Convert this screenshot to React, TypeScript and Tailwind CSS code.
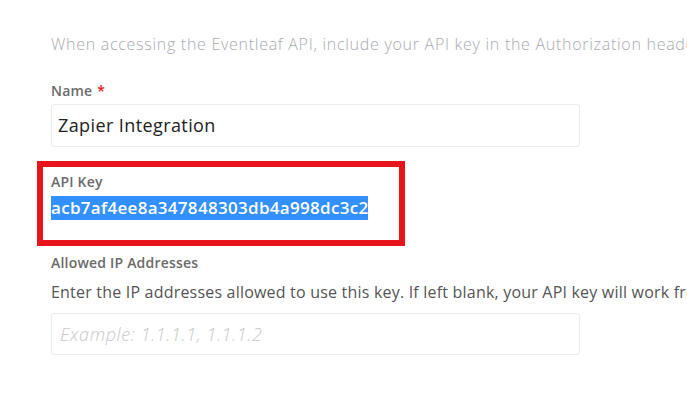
import React from "react";

export default function App() {
  return (
    <div className="w-[687px] h-[401px] overflow-hidden bg-white font-['Open_Sans',sans-serif]">
      <div className="pl-[51px] pt-[34px] w-[900px]">
        <p className="text-[16px] leading-[20px] text-[#a7abb0] whitespace-nowrap font-light tracking-[0.72px]">
          When accessing the Eventleaf API, include your API key in the Authorization header with every request.
        </p>
        <div className="mt-[29px] text-[14px] leading-[16px] font-semibold text-[#6b6b6b] tracking-[0.2px]">
          Name <span className="text-[#e8141c] ml-[1px]">*</span>
        </div>
        <div className="mt-[5px] w-[529px] h-[43px] border border-[#ececec] rounded-[3px] px-[6px] flex items-center text-[18px] text-[#222] tracking-[0.4px]">
          Zapier Integration
        </div>
        <div className="mt-[14px] -ml-[14px] w-[368px] h-[85px] border-[6px] border-[#e8141c] pl-[8px] pt-[7px]">
          <div className="text-[14px] leading-[16px] font-semibold text-[#6b6b6b] tracking-[0.2px]">API Key</div>
          <div className="mt-[6px] h-[24px] flex">
            <span className="bg-[#3390ff] text-white text-[17px] leading-[24px] font-semibold tracking-[0.3px]">
              acb7af4ee8a347848303db4a998dc3c2
            </span>
          </div>
        </div>
        <div className="mt-[9px] text-[14px] leading-[16px] font-semibold text-[#6b6b6b] tracking-[0.2px]">Allowed IP Addresses</div>
        <p className="mt-[11px] text-[16px] leading-[20px] text-[#555] whitespace-nowrap tracking-[0.2px]">
          Enter the IP addresses allowed to use this key. If left blank, your API key will work from any IP address.
        </p>
        <div className="mt-[11px] w-[529px] h-[42px] border border-[#ececec] rounded-[3px] px-[8px] flex items-center text-[18px] italic font-light text-[#c9c9c9] tracking-[0.6px]">
          Example: 1.1.1.1, 1.1.1.2
        </div>
      </div>
    </div>
  );
}
